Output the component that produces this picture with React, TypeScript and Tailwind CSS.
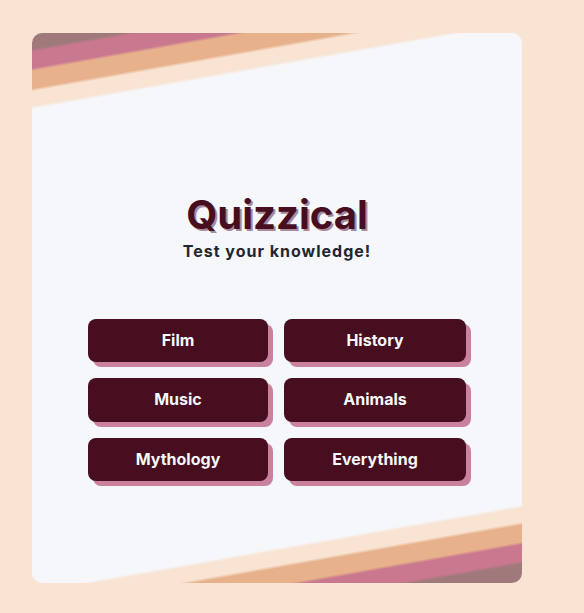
const categories = ["Film", "History", "Music", "Animals", "Mythology", "Everything"];

function CategoryButton({ label }: { label: string }) {
  return (
    <button
      type="button"
      className="cursor-pointer rounded-lg bg-[#460e1f] px-4 py-3 text-base leading-[1.2] font-bold text-[#f5f7fb] shadow-[5px_5px_0_#c9819d]"
    >
      {label}
    </button>
  );
}

export default function App() {
  return (
    <div className="min-h-screen bg-[#f9e4d4] px-8 pt-[33px] pb-[30px] font-['Inter',sans-serif]">
      <main className="flex min-h-[550px] w-full max-w-[490px] flex-col items-center justify-center rounded-[10px] bg-[linear-gradient(170deg,#a07a7a_2.5%,#c9788f_3%,#c9788f_5.5%,#e7b28b_6%,#e7b28b_8.7%,#f9e4d4_9.2%,#f9e4d4_11.5%,#f5f7fb_12%,#f5f7fb_87.7%,#f9e4d4_88.2%,#f9e4d4_90.4%,#e7b28b_90.9%,#e7b28b_93.5%,#c9788f_94%,#c9788f_96.5%,#a07a7a_97%)] pt-[54px]">
        <h1 className="text-[40px] leading-[52px] font-bold text-[#460e1f] [text-shadow:2px_2px_0_#a98a9d]">
          Quizzical
        </h1>
        <p className="text-base leading-5 font-bold tracking-[1px] text-[#1f2630]">
          Test your knowledge!
        </p>
        <div className="mt-[58px] grid grid-cols-[180px_182px] gap-4">
          {categories.map((label) => (
            <CategoryButton key={label} label={label} />
          ))}
        </div>
      </main>
    </div>
  );
}
